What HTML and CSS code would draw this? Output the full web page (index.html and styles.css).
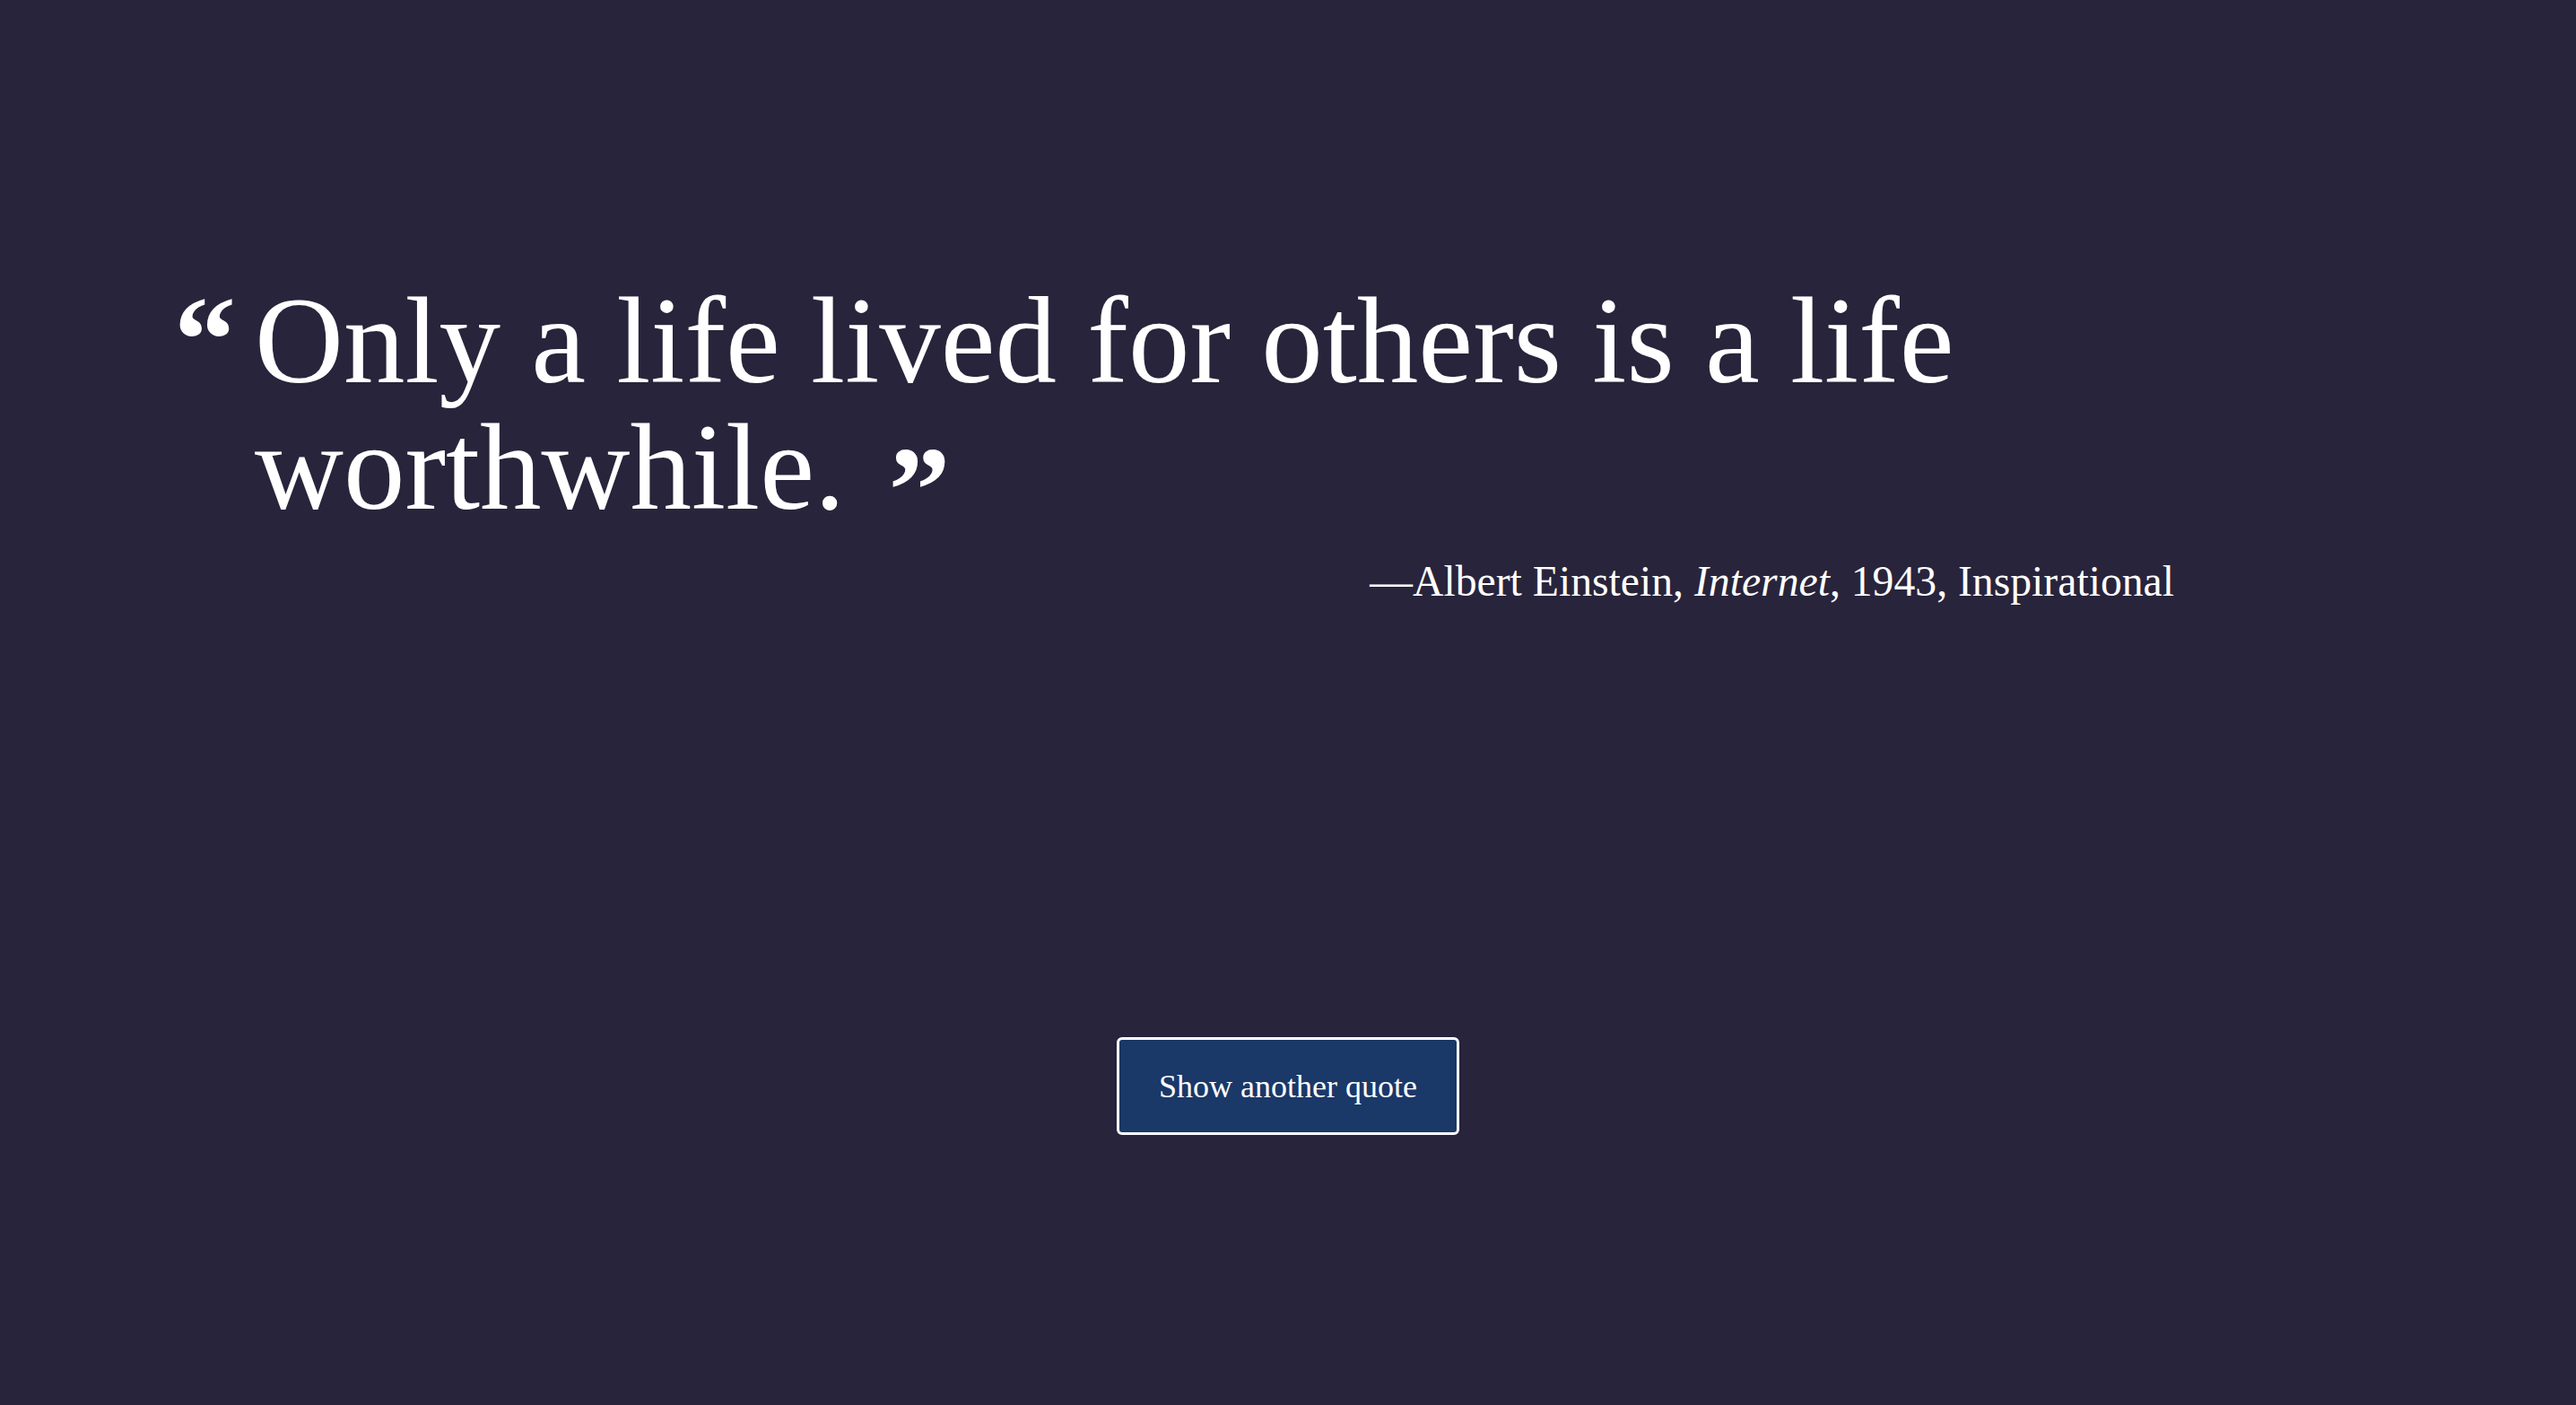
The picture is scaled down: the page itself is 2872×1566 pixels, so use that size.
FILE: index.html
```html
<!DOCTYPE html>
<html lang="en">
<head>
<meta charset="utf-8">
<title>Random Quote</title>
<link rel="stylesheet" href="styles.css">
</head>
<body>
<main class="page">
  <figure class="quote-block">
    <blockquote class="quote"><span class="mark mark-open">&ldquo;</span><span class="line">Only a life lived for others is a life</span> <span class="line">worthwhile.</span> <span class="mark mark-close">&rdquo;</span></blockquote>
    <figcaption class="cite">&mdash;Albert Einstein, <em>Internet</em>, 1943, Inspirational</figcaption>
  </figure>
  <div class="actions">
    <button class="btn" type="button">Show another quote</button>
  </div>
</main>
</body>
</html>
```
FILE: styles.css
```css
html, body {
  margin: 0;
  padding: 0;
}
body {
  background: #28243b;
  color: #ffffff;
  font-family: "Liberation Serif", "Times New Roman", serif;
  min-height: 1566px;
}
.page {
  padding-top: 310px;
}
.quote-block {
  margin: 0 448px 0 284px;
}
.quote {
  position: relative;
  margin: 0;
  font-size: 137px;
  line-height: 141px;
  font-weight: 400;
}
.mark {
  font-weight: 700;
  font-size: 138px;
  line-height: 0;
}
.mark-open {
  position: absolute;
  left: -90px;
  top: 69px;
}
.mark-close {
  margin-left: 14px;
  vertical-align: -26px;
}
.cite {
  margin-top: 29px;
  text-align: right;
  font-size: 47.7px;
  line-height: 54px;
}
.cite em {
  font-style: italic;
}
.actions {
  display: flex;
  justify-content: center;
  margin-top: 481px;
}
.btn {
  width: 382px;
  height: 109px;
  border: 3px solid #ffffff;
  border-radius: 6px;
  background: #1a3868;
  color: #ffffff;
  font-family: "Liberation Serif", "Times New Roman", serif;
  font-size: 36px;
  cursor: pointer;
}
```
